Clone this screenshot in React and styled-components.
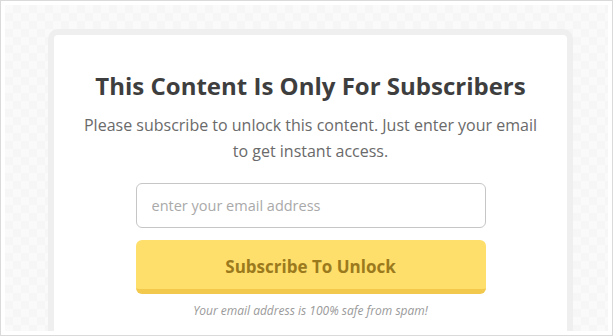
import React from 'react';
import styled, { createGlobalStyle } from 'styled-components';

const Global = createGlobalStyle`
  body {
    margin: 0;
    background: #fff;
    font-family: "Open Sans", "Liberation Sans", sans-serif;
  }
`;

const Frame = styled.div`
  width: 613px;
  height: 336px;
  box-sizing: border-box;
  border: 1px solid #dadada;
  padding: 4px;
  background: #fff;
`;

const Canvas = styled.div`
  height: 100%;
  overflow: hidden;
  padding: 24px 0 0 43px;
  box-sizing: border-box;
  background-color: #fafafa;
  background-image: conic-gradient(#f6f6f6 25%, transparent 0 50%, #f6f6f6 0 75%, transparent 0);
  background-size: 16px 16px;
`;

const CardShell = styled.div`
  width: 525px;
  box-sizing: border-box;
  border: 6px solid #efefef;
  border-radius: 10px;
  background: #fff;
`;

const CardBody = styled.div`
  display: flex;
  flex-direction: column;
  align-items: center;
  padding: 35px 20px 40px;
  text-align: center;
`;

const Title = styled.h2`
  margin: 0;
  font-size: 24px;
  font-weight: 700;
  line-height: 32px;
  color: #3e3e3e;
`;

const Lead = styled.p`
  margin: 10px 0 0;
  width: 470px;
  font-size: 16px;
  line-height: 26px;
  color: #6a6a6a;
`;

const Form = styled.form`
  display: flex;
  flex-direction: column;
  width: 350px;
  margin-top: 19px;
  gap: 12px;
`;

const EmailInput = styled.input`
  height: 45px;
  box-sizing: border-box;
  border: 1px solid #c6c6c6;
  border-radius: 6px;
  padding: 0 15px;
  font-family: inherit;
  font-size: 14.5px;
  color: #444;
  outline: none;
  &::placeholder {
    color: #a9a9a9;
  }
`;

const SubmitButton = styled.button`
  height: 54px;
  box-sizing: border-box;
  border: none;
  border-bottom: 5px solid #f2c94c;
  border-radius: 6px;
  background: #ffdf6b;
  font-family: inherit;
  font-size: 17px;
  font-weight: 700;
  color: #9b7a1e;
  padding-top: 4px;
  cursor: pointer;
`;

const Note = styled.p`
  margin: 9px 0 0;
  font-size: 12px;
  line-height: 16px;
  font-style: italic;
  color: #9a9a9a;
`;

export default function App() {
  return (
    <>
      <Global />
      <Frame>
        <Canvas>
          <CardShell>
            <CardBody>
              <Title>This Content Is Only For Subscribers</Title>
              <Lead>
                Please subscribe to unlock this content. Just enter your email to get instant access.
              </Lead>
              <Form onSubmit={e => e.preventDefault()}>
                <EmailInput type="email" placeholder="enter your email address" />
                <SubmitButton type="submit">Subscribe To Unlock</SubmitButton>
              </Form>
              <Note>Your email address is 100% safe from spam!</Note>
            </CardBody>
          </CardShell>
        </Canvas>
      </Frame>
    </>
  );
}
